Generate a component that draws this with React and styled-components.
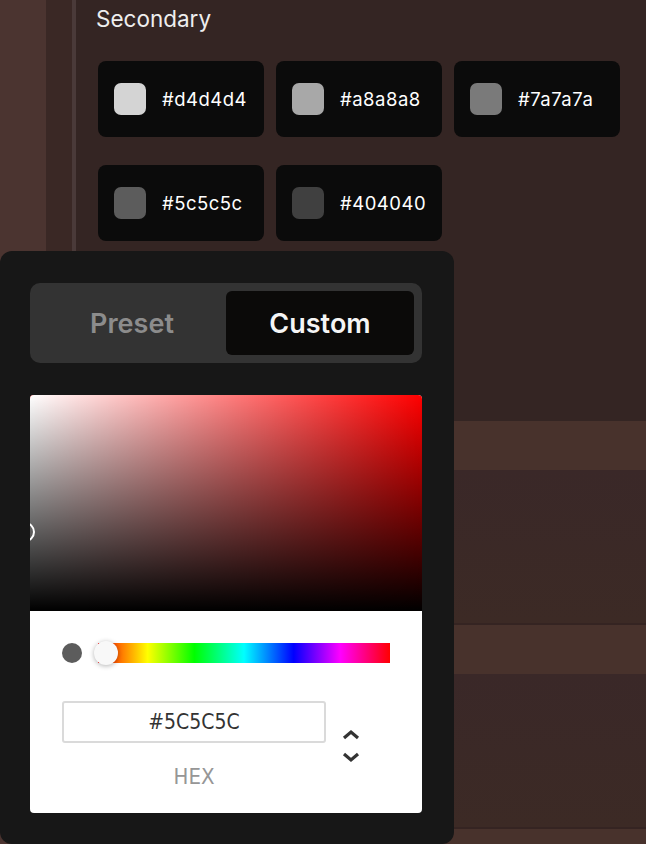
import styled, { createGlobalStyle } from "styled-components";

const GlobalStyle = createGlobalStyle`
  html, body {
    margin: 0;
    padding: 0;
    background: #352523;
    overflow: hidden;
  }
  * {
    box-sizing: border-box;
  }
`;

const secondary = ["#d4d4d4", "#a8a8a8", "#7a7a7a", "#5c5c5c", "#404040"];

const App = () => {
  return (
    <Shell>
      <GlobalStyle />
      <LeftRail />
      <SubRail />
      <Divider />
      <Main>
        <Section>
          <Title>Secondary</Title>
          <SwatchGrid>
            {secondary.map((hex) => (
              <SwatchCard key={hex}>
                <Chip color={hex} />
                <HexText>{hex}</HexText>
              </SwatchCard>
            ))}
          </SwatchGrid>
        </Section>
        <Band $h={49} $light />
        <Band $h={155} />
        <Band $h={49} $light />
        <Band $h={155} />
        <Band $h={40} $light />
      </Main>

      <Popover>
        <Tabs>
          <Tab>Preset</Tab>
          <Tab $active>Custom</Tab>
        </Tabs>
        <Picker>
          <Saturation>
            <SatPointer />
          </Saturation>
          <Controls>
            <HueRow>
              <Preview color="#5c5c5c" />
              <HueTrack>
                <HueThumb />
              </HueTrack>
            </HueRow>
            <FieldRow>
              <Field>
                <HexInput readOnly value="#5C5C5C" />
                <FieldLabel>HEX</FieldLabel>
              </Field>
              <Toggle>
                <svg width="18" height="34" viewBox="0 0 18 34">
                  <path
                    d="M2 9 L9 3 L16 9"
                    fill="none"
                    stroke="#333"
                    strokeWidth="3.2"
                  />
                  <path
                    d="M2 25 L9 31 L16 25"
                    fill="none"
                    stroke="#333"
                    strokeWidth="3.2"
                  />
                </svg>
              </Toggle>
            </FieldRow>
          </Controls>
        </Picker>
      </Popover>
    </Shell>
  );
};

export default App;

const Shell = styled.div`
  position: relative;
  display: flex;
  width: 646px;
  height: 844px;
  overflow: hidden;
  font-family: Inter, "Noto Sans", sans-serif;
`;

const LeftRail = styled.div`
  width: 46px;
  background: #4b3430;
`;

const SubRail = styled.div`
  width: 26px;
  background: #3a2825;
`;

const Divider = styled.div`
  width: 4px;
  background: #4a3a39;
`;

const Main = styled.div`
  flex: 1;
  display: flex;
  flex-direction: column;
  background: #342523;
`;

const Section = styled.div`
  height: 421px;
  flex-shrink: 0;
  padding: 5px 0 0 22px;
`;

const Title = styled.div`
  font-size: 22.5px;
  line-height: 28px;
  font-weight: 400;
  color: #eeeeee;
  margin-left: -2px;
`;

const SwatchGrid = styled.div`
  display: grid;
  grid-template-columns: repeat(3, 166px);
  column-gap: 12px;
  row-gap: 28px;
  margin-top: 28px;
`;

const SwatchCard = styled.div`
  height: 76px;
  background: #0b0b0b;
  border-radius: 8px;
  display: flex;
  align-items: center;
  padding-left: 16px;
  gap: 16px;
`;

const Chip = styled.div`
  width: 32px;
  height: 32px;
  border-radius: 7px;
  background: ${(p) => p.color};
`;

const HexText = styled.span`
  color: #ffffff;
  font-size: 18.5px;
  letter-spacing: 0.5px;
`;

const Band = styled.div`
  height: ${(p) => p.$h}px;
  flex-shrink: 0;
  background: ${(p) =>
    p.$light ? "#48322c" : "linear-gradient(#3a2828, #3c2a25)"};
  border-bottom: ${(p) => (p.$light ? "none" : "2px solid #352422")};
`;

const Popover = styled.div`
  position: absolute;
  left: 0;
  top: 251px;
  width: 454px;
  height: 593px;
  background: #171717;
  border-radius: 12px;
  padding: 32px 32px 0 30px;
`;

const Tabs = styled.div`
  display: flex;
  height: 80px;
  padding: 8px;
  background: #333333;
  border-radius: 10px;
`;

const Tab = styled.div`
  flex: 1;
  display: flex;
  align-items: center;
  justify-content: center;
  border-radius: 6px;
  font-size: 27px;
  font-weight: 600;
  color: ${(p) => (p.$active ? "#f5f5f5" : "#8c8c8c")};
  background: ${(p) => (p.$active ? "#0b0a09" : "transparent")};
`;

const Picker = styled.div`
  margin-top: 32px;
  height: 418px;
  background: #ffffff;
  border-radius: 4px;
  overflow: hidden;
`;

const Saturation = styled.div`
  position: relative;
  height: 216px;
  overflow: hidden;
  background: linear-gradient(to top, #000, rgba(0, 0, 0, 0)),
    linear-gradient(to right, #fff, rgba(255, 255, 255, 0)), #ff0000;
`;

const SatPointer = styled.div`
  position: absolute;
  left: -15px;
  top: 127px;
  width: 20px;
  height: 20px;
  border-radius: 50%;
  border: 2px solid #ffffff;
`;

const Controls = styled.div`
  padding: 32px 32px 0 32px;
`;

const HueRow = styled.div`
  display: flex;
  align-items: center;
  height: 20px;
`;

const Preview = styled.div`
  width: 20px;
  height: 20px;
  border-radius: 50%;
  background: ${(p) => p.color};
  margin-right: 16px;
`;

const HueTrack = styled.div`
  position: relative;
  flex: 1;
  height: 20px;
  background: linear-gradient(
    to right,
    #f00 0%,
    #ff0 17%,
    #0f0 33%,
    #0ff 50%,
    #00f 67%,
    #f0f 83%,
    #f00 100%
  );
`;

const HueThumb = styled.div`
  position: absolute;
  left: -4px;
  top: -2px;
  width: 24px;
  height: 24px;
  border-radius: 50%;
  background: #f8f8f8;
  box-shadow: 0 1px 5px rgba(0, 0, 0, 0.3);
`;

const FieldRow = styled.div`
  display: flex;
  align-items: center;
  margin-top: 38px;
`;

const Field = styled.div`
  width: 264px;
  display: flex;
  flex-direction: column;
  align-items: center;
`;

const HexInput = styled.input`
  width: 100%;
  height: 42px;
  border: none;
  border-radius: 3px;
  box-shadow: inset 0 0 0 2px #dadada;
  outline: none;
  text-align: center;
  font-family: "DejaVu Sans Condensed", "DejaVu Sans", sans-serif;
  font-stretch: condensed;
  font-size: 21px;
  color: #333333;
  background: #ffffff;
`;

const FieldLabel = styled.div`
  margin-top: 22px;
  font-family: "Liberation Sans Narrow", "DejaVu Sans Condensed", sans-serif;
  font-stretch: condensed;
  font-size: 22px;
  line-height: 24px;
  color: #969696;
`;

const Toggle = styled.div`
  margin-left: 16px;
  margin-top: 2px;
  display: flex;
  align-items: center;
`;
